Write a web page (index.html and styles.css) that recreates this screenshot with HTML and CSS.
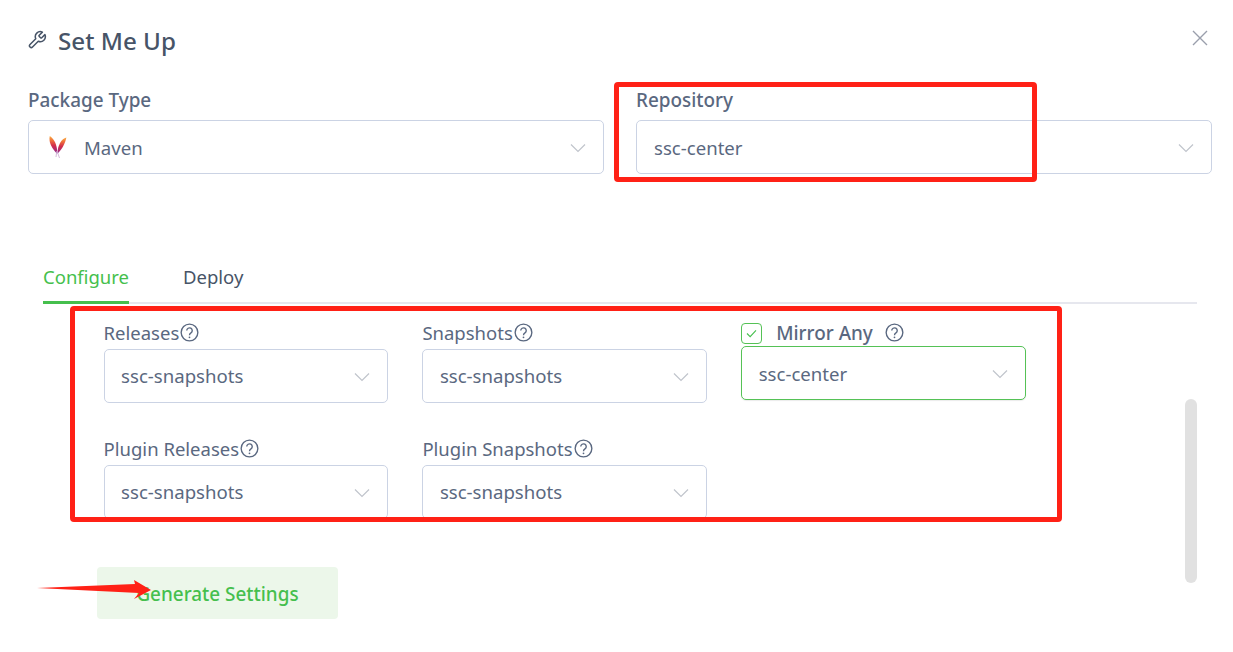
FILE: index.html
```html
<!DOCTYPE html>
<html lang="en">
<head>
<meta charset="utf-8">
<title>Set Me Up</title>
<link rel="stylesheet" href="styles.css">
</head>
<body>
<svg class="defs" width="0" height="0" aria-hidden="true">
  <defs>
    <symbol id="chev" viewBox="0 0 16 10"><path d="M1 1.5 8 8.5 15 1.5" fill="none" stroke="#c0c4cc" stroke-width="1.2"/></symbol>
    <symbol id="help" viewBox="0 0 18 18"><circle cx="9" cy="9" r="7.9" fill="none" stroke="#5a6880" stroke-width="1.3"/><path d="M6.4 7.2a2.6 2.6 0 1 1 4 2.2c-.9.6-1.4 1-1.4 2.1" fill="none" stroke="#5a6880" stroke-width="1.3"/><circle cx="9" cy="13.6" r=".85" fill="#5a6880"/></symbol>
    <linearGradient id="feather" x1="0" y1="0" x2="0" y2="1">
      <stop offset="0" stop-color="#f9b043"/><stop offset=".25" stop-color="#f0703a"/><stop offset=".55" stop-color="#d12d4c"/><stop offset=".85" stop-color="#a52a78"/><stop offset="1" stop-color="#7d3a96"/>
    </linearGradient>
  </defs>
</svg>
<main class="dialog">
  <header class="head">
    <h1 class="title">
      <svg class="wrench" viewBox="0 0 24 24"><path d="M14.7 6.3a1 1 0 0 0 0 1.4l1.6 1.6a1 1 0 0 0 1.4 0l3.77-3.77a6 6 0 0 1-7.94 7.94l-6.91 6.91a2.12 2.12 0 0 1-3-3l6.91-6.91a6 6 0 0 1 7.94-7.94l-3.76 3.76z"/></svg>
      Set Me Up
    </h1>
    <svg class="close" viewBox="0 0 16 16"><path d="M1 1 15 15M15 1 1 15"/></svg>
  </header>

  <section class="top">
    <div class="field">
      <label class="top-label">Package Type</label>
      <div class="select">
        <svg class="feather" viewBox="0 0 18 24"><path d="M.8 1C-.4 6 1.6 12 7.8 18.6 9 13 6 4 .8 1Z" fill="url(#feather)"/><path d="M17.4 2.5C12.5 4 8.8 9.5 8.3 18.8 12.5 15 16 9 17.4 2.5Z" fill="url(#feather)"/><path d="M7.8 16 7 22M8.4 17 10.5 23" stroke="#c9a7cf" stroke-width=".8" fill="none"/></svg>
        <span class="value">Maven</span>
        <svg class="chev"><use href="#chev"/></svg>
      </div>
    </div>
    <div class="field">
      <label class="top-label">Repository</label>
      <div class="select">
        <span class="value">ssc-center</span>
        <svg class="chev"><use href="#chev"/></svg>
      </div>
    </div>
  </section>

  <nav class="tabs">
    <span class="tab active">Configure</span>
    <span class="tab">Deploy</span>
  </nav>

  <section class="pane">
    <div class="grid">
      <div class="cell">
        <div class="lab">Releases<svg class="help"><use href="#help"/></svg></div>
        <div class="select"><span class="value">ssc-snapshots</span><svg class="chev"><use href="#chev"/></svg></div>
      </div>
      <div class="cell">
        <div class="lab">Snapshots<svg class="help"><use href="#help"/></svg></div>
        <div class="select"><span class="value">ssc-snapshots</span><svg class="chev"><use href="#chev"/></svg></div>
      </div>
      <div class="cell">
        <div class="lab mirror">
          <span class="check"><svg viewBox="0 0 12 10"><path d="M1 5 4.5 8.5 11 1.5"/></svg></span>
          <span class="mirror-text">Mirror Any</span>
          <svg class="help"><use href="#help"/></svg>
        </div>
        <div class="select on"><span class="value">ssc-center</span><svg class="chev"><use href="#chev"/></svg></div>
      </div>
      <div class="cell">
        <div class="lab">Plugin Releases<svg class="help"><use href="#help"/></svg></div>
        <div class="select"><span class="value">ssc-snapshots</span><svg class="chev"><use href="#chev"/></svg></div>
      </div>
      <div class="cell">
        <div class="lab">Plugin Snapshots<svg class="help"><use href="#help"/></svg></div>
        <div class="select"><span class="value">ssc-snapshots</span><svg class="chev"><use href="#chev"/></svg></div>
      </div>
    </div>
  </section>

  <div class="actions"><button class="generate" type="button">Generate Settings</button></div>

  <div class="scrollbar"></div>
  <div class="mark mark-repo"></div>
  <div class="mark mark-grid"></div>
  <svg class="arrow" viewBox="0 0 114 24"><path d="M0 10 98 6 97 2 114 12 97 21 102 15Z"/></svg>
</main>
</body>
</html>
```

FILE: styles.css
```css
* { box-sizing: border-box; }
html, body { margin: 0; background: #fff; }
body { font-family: "Noto Sans", "Open Sans", sans-serif; color: #5a6880; overflow: hidden; }
.defs { position: absolute; }
.dialog { position: relative; width: 1233px; height: 652px; padding: 21px 21px 0 28px; }

.head { display: flex; justify-content: space-between; align-items: flex-start; height: 68px; }
.title { display: flex; align-items: center; gap: 11px; margin: 0; height: 40px; font-size: 24.2px; line-height: 40px; font-weight: 500; color: #475467; }
.wrench { width: 20px; height: 20px; fill: none; stroke: #475467; stroke-width: 1.8; stroke-linecap: round; stroke-linejoin: round; margin: -3px 0 0 -1px; }
.close { width: 16px; height: 16px; margin: 9px 4px 0 0; fill: none; stroke: #9a9fac; stroke-width: 1.4; }

.top { display: grid; grid-template-columns: 576px 576px; gap: 32px; }
.top-label { display: block; height: 31px; margin-top: -1px; margin-bottom: 1px; font-size: 18.9px; line-height: 24px; font-weight: 500; color: #5a6880; }

.select { display: flex; align-items: center; height: 54px; padding: 0 17px; border: 1px solid #cbd3e4; border-radius: 5px; background: #fff; }
.value { flex: 1; font-size: 18.6px; line-height: 24px; color: #5a6880; padding-top: 1px; }
.chev { width: 16px; height: 10px; flex: none; margin-top: 2px; }
.feather { width: 18px; height: 24px; flex: none; margin: 0 17px 0 3px; }
.select.on { border-color: #55c256; box-shadow: 0 1px 1px rgba(0, 0, 0, .08); }

.tabs { display: flex; gap: 54px; margin: 86px 0 0 15px; height: 44px; width: 1154px; border-bottom: 2px solid #e6e7ee; }
.tab { height: 44px; padding-top: 4px; font-size: 18.5px; line-height: 26px; color: #475467; }
.tab.active { color: #45bf4d; border-bottom: 3px solid #45bf4d; }

.pane { height: 216px; padding: 17px 0 0 75.6px; overflow: hidden; }
.grid { display: grid; grid-template-columns: repeat(3, 284.6px); column-gap: 34.2px; row-gap: 34px; }
.cell { display: flex; flex-direction: column; height: 82px; }
.cell .select { height: 54px; padding-left: 16.5px; }
.cell .value { padding-top: 0; }
.cell .select.on .value { padding-top: 1px; }
.lab { display: flex; align-items: center; height: 28px; padding-bottom: 5px; font-size: 18.5px; line-height: 24px; color: #5a6880; }
.lab .help { width: 19px; height: 19px; margin-left: 1px; flex: none; }
.lab.mirror { height: 25px; padding-bottom: 2px; }
.check { display: flex; align-items: center; justify-content: center; width: 21px; height: 21px; margin-top: 2px; border: 1px solid #55c256; border-radius: 4px; flex: none; }
.check svg { width: 11px; height: 9px; fill: none; stroke: #45bf4d; stroke-width: 1.2; }
.mirror-text { margin-left: 14px; font-size: 18.9px; font-weight: 500; }
.lab.mirror .help { margin-left: 12px; }

.actions { margin: 47px 0 0 69px; }
.generate { width: 241px; height: 52px; padding: 1px 0 0; border: 0; border-radius: 4px; background: #ecf7ea; color: #45bf4d; font: 500 18.9px/24px "Noto Sans", "Open Sans", sans-serif; }

.scrollbar { position: absolute; left: 1185px; top: 399px; width: 12px; height: 184px; border-radius: 6px; background: #e1e1e1; }
.mark { position: absolute; border: 5px solid #ff2116; border-radius: 4px; }
.mark-repo { left: 614px; top: 82px; width: 423px; height: 100px; }
.mark-grid { left: 70px; top: 306px; width: 992px; height: 216px; }
.arrow { position: absolute; left: 37px; top: 578px; width: 114px; height: 24px; fill: #ff2116; }
```
